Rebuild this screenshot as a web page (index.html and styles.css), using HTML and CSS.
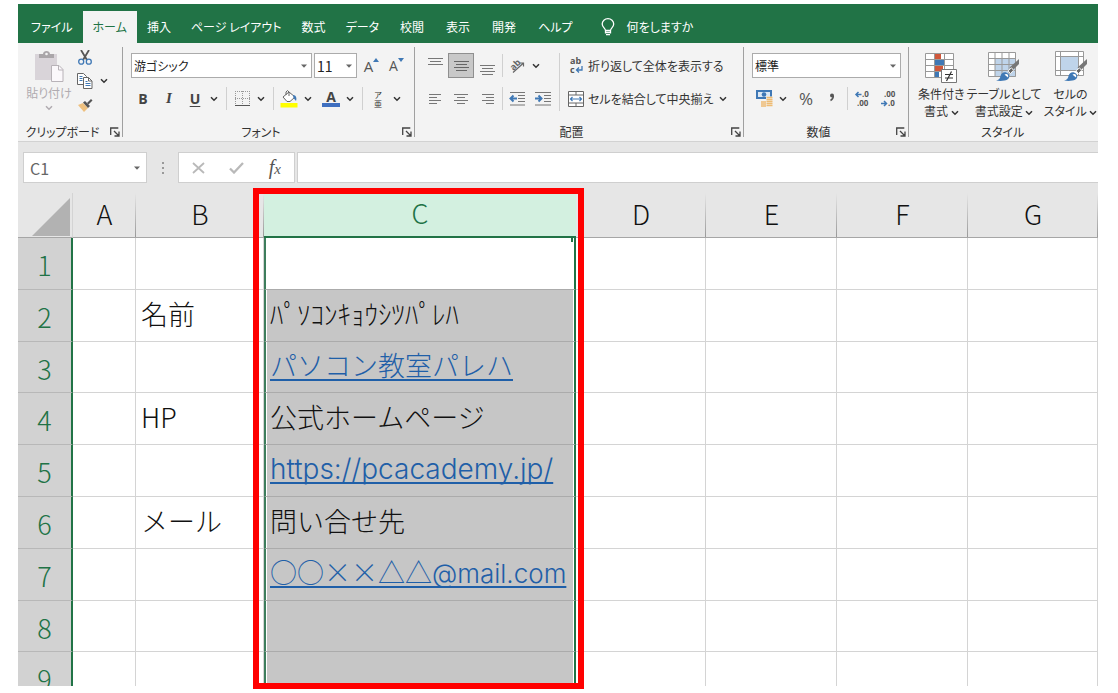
FILE: index.html
```html
<!DOCTYPE html>
<html lang="ja">
<head>
<meta charset="utf-8">
<title>Excel</title>
<link rel="stylesheet" href="styles.css">
</head>
<body>
<svg class="defs" aria-hidden="true">
  <symbol id="chev" viewBox="0 0 8 6"><path d="M1 1.200l3 3 3-3" fill="none" stroke="currentColor" stroke-width="1.500"/></symbol>
  <symbol id="tri" viewBox="0 0 6 4"><path d="M0 .5h6L3 3.800z" fill="#666"/></symbol>
  <symbol id="launch" viewBox="0 0 10 10"><path d="M.7 8V1h7.600M4 4l4.500 4.500M9 4.500V9H4.500" fill="none" stroke="#444" stroke-width="1.300"/></symbol>
  <symbol id="brush" viewBox="0 0 24 24"><path d="M23 0v5l-6.500 6.500-3-3z" fill="#777"/><path d="M15.500 8.800l-3.500 3 2.500 2.800 3-3.300z" fill="#666" stroke="#f3f3f3"/><path d="M0 21.500c3-.5 4-2 4.500-4.500 1-4 5-5 8-2 2 3 0 6-4 6.500-3 .6-6 .4-8.500 0z" fill="#3f78b5"/><path d="M8.500 15.500c2.500-1.500 4.500.5 3.500 3-1-1-2-1.500-3.500-3z" fill="#fff"/></symbol>
</svg>
<div class="app">
  <nav class="tabs">
    <a href="#">ファイル</a>
    <a href="#" class="active">ホーム</a>
    <a href="#">挿入</a>
    <a href="#">ページ レイアウト</a>
    <a href="#">数式</a>
    <a href="#">データ</a>
    <a href="#">校閲</a>
    <a href="#">表示</a>
    <a href="#">開発</a>
    <a href="#">ヘルプ</a>
    <a href="#" class="tell"><svg width="14" height="18" viewBox="0 0 14 18" fill="none" stroke="#fff" stroke-width="1.300"><path d="M4.500 12.500C4.500 10 1.200 9.500 1.200 6a5.700 5.300 0 0 1 11.500 0c0 3.500-3.200 4-3.200 6.500zM4.500 14.500h5M5 16.700h4M4.500 12v3.500M9.500 12v3.500"/></svg><span>何をしますか</span></a>
  </nav>

  <div class="ribbon">
    <section class="group clipboard">
      <div class="body">
        <button class="paste" disabled>
          <svg width="30" height="32" viewBox="0 0 30 32"><path d="M1 3h22v26H1z" fill="#d9d4d9"/><path d="M5 7V3h4c0-4 7-4 7 0h4v4z" fill="#aaa6a9"/><circle cx="12.500" cy="3" r="1.300" fill="#f3f3f3"/><path d="M17.500 14.500h7.500l4 4v12H17.500z" fill="#fbf8fb" stroke="#b8b3b8"/><path d="M24.500 14.500V19H29" fill="none" stroke="#b8b3b8"/></svg>
          <span>貼り付け</span>
          <svg class="chev"><use href="#chev"/></svg>
        </button>
        <div class="clips">
          <button aria-label="切り取り"><svg width="14" height="15" viewBox="0 0 14 15" fill="none"><path d="M3 0l6 10M11 0L5 10" stroke="#555" stroke-width="1.800"/><circle cx="3.200" cy="11.700" r="2.500" stroke="#3f78b5" stroke-width="1.300"/><circle cx="10.800" cy="11.700" r="2.500" stroke="#3f78b5" stroke-width="1.300"/></svg></button>
          <div class="row-s"><button aria-label="コピー"><svg width="16" height="16" viewBox="0 0 16 16" fill="#fff" stroke="#666"><path d="M.5.5h6l3 3v8h-9z"/><path d="M2.500 3.500h3M2.500 5.500h3M2.500 7.500h3" stroke="#3f78b5"/><path d="M6.500 4.500h5l3.500 3.500v7.500H6.500z"/><path d="M11.500 4.500V8H15" fill="none"/><path d="M8.500 8.500h2M8.500 10.500h5M8.500 12.500h5" stroke="#3f78b5"/></svg></button><button class="dd" aria-label="コピーのオプション"><svg class="chev"><use href="#chev"/></svg></button></div>
          <button aria-label="書式のコピー"><svg width="15" height="13" viewBox="0 0 15 13"><path d="M0 6l5-2 5 5-4 4z" fill="#eec07e"/><path d="M5 3.500l2-1.500 5 5-2 2z" fill="#555"/><path d="M9 4l4-4 1.500 1.500-4 4z" fill="#555"/></svg></button>
        </div>
      </div>
      <footer><span>クリップボード</span><button aria-label="クリップボードの設定"><svg class="launch"><use href="#launch"/></svg></button></footer>
    </section>

    <section class="group font">
      <div class="body stack">
        <div class="row">
          <label class="combo name"><select aria-label="フォント名"><option>游ゴシック</option></select><svg class="tri"><use href="#tri"/></svg></label>
          <label class="combo size"><select aria-label="フォント サイズ"><option>11</option></select><svg class="tri"><use href="#tri"/></svg></label>
          <button class="grow big" aria-label="フォント サイズの拡大">A<svg width="6" height="4" viewBox="0 0 6 4"><path d="M0 4l3-4 3 4z" fill="#3f78b5"/></svg></button>
          <button class="grow" aria-label="フォント サイズの縮小">A<svg width="6" height="4" viewBox="0 0 6 4"><path d="M0 0h6L3 4z" fill="#3f78b5"/></svg></button>
        </div>
        <div class="row">
          <button class="b">B</button><button class="i">I</button><button class="u">U</button><button class="dd" aria-label="下線の種類"><svg class="chev"><use href="#chev"/></svg></button>
          <span class="sep"></span>
          <button aria-label="罫線"><svg width="15" height="16" viewBox="0 0 15 16" fill="none" stroke="#999"><path d="M.5 0v14M7.500 0v14M14.500 0v14M0 .5h15M0 7.500h15" stroke-dasharray="1 1"/><path d="M0 14.500h15" stroke="#555"/></svg></button><button class="dd" aria-label="罫線の種類"><svg class="chev"><use href="#chev"/></svg></button>
          <span class="sep"></span>
          <button aria-label="塗りつぶしの色"><svg width="18" height="18" viewBox="0 0 18 18"><path d="M.5 13h17v4.500H.5z" fill="#ff0"/><path d="M3 7l6-5 6 5-5 4.500H7z" fill="#fff" stroke="#666"/><path d="M6 5V2q1.500-3 3 0v4" fill="none" stroke="#666"/><path d="M13 5c3 0 4 3 3 6-1-1-1.500-2-2.500-3z" fill="#3f78b5"/></svg></button><button class="dd" aria-label="塗りつぶしの色を選択"><svg class="chev"><use href="#chev"/></svg></button>
          <button class="color">A</button><button class="dd" aria-label="フォントの色を選択"><svg class="chev"><use href="#chev"/></svg></button>
          <span class="sep"></span>
          <button class="ruby" aria-label="ふりがなの表示"><span>ア</span><span>亜</span></button><button class="dd" aria-label="ふりがなの設定"><svg class="chev"><use href="#chev"/></svg></button>
        </div>
      </div>
      <footer><span>フォント</span><button aria-label="フォントの設定"><svg class="launch"><use href="#launch"/></svg></button></footer>
    </section>

    <section class="group align">
      <div class="body">
        <div class="stack">
          <div class="row">
            <button aria-label="上揃え"><svg width="15" height="18" viewBox="0 0 15 18" stroke="#777"><path d="M0 1.500h15M2 4.500h11M0 7.500h15"/></svg></button><button class="on" aria-label="上下中央揃え"><svg width="15" height="18" viewBox="0 0 15 18" stroke="#666"><path d="M0 4.500h15M2 7.500h11M0 10.500h15M2 13.500h11"/></svg></button><button aria-label="下揃え"><svg width="15" height="18" viewBox="0 0 15 18" stroke="#777"><path d="M0 8.500h15M2 11.500h11M0 14.500h15M2 17.500h11"/></svg></button>
            <span class="sep tight"></span>
            <button aria-label="方向"><svg width="18" height="20" viewBox="0 0 18 20"><g transform="rotate(-45 9 10)"><text x="3" y="11" class="ab">ab</text></g><path d="M5 16.500L15.500 7M15.500 10.500V7H12" fill="none" stroke="#666" stroke-width="1.200"/></svg></button><button class="dd" aria-label="方向の種類"><svg class="chev"><use href="#chev"/></svg></button>
          </div>
          <div class="row">
            <button aria-label="左揃え"><svg width="13" height="12" viewBox="0 0 13 12" stroke="#777"><path d="M0 1.500h12M0 4.500h8M0 7.500h12M0 10.500h8"/></svg></button><button aria-label="中央揃え"><svg width="14" height="12" viewBox="0 0 14 12" stroke="#777"><path d="M0 1.500h14M3 4.500h8M0 7.500h14M3 10.500h8"/></svg></button><button aria-label="右揃え"><svg width="13" height="12" viewBox="0 0 13 12" stroke="#777"><path d="M1 1.500h12M5 4.500h8M1 7.500h12M5 10.500h8"/></svg></button>
            <span class="sep tight"></span>
            <button aria-label="インデントを減らす"><svg width="16" height="14" viewBox="0 0 16 14" fill="none" stroke="#777"><path d="M1 .5h15M9 3.500h7M9 6.500h7M9 9.500h7M1 13h15"/><path d="M8 6.500H2M4.500 3.500l-3 3 3 3" stroke="#3f78b5" stroke-width="2"/></svg></button><button aria-label="インデントを増やす"><svg width="16" height="14" viewBox="0 0 16 14" fill="none" stroke="#777"><path d="M0 .5h16M9 3.500h7M9 6.500h7M9 9.500h7M0 13h16"/><path d="M0 6.500h6M3.500 3.500l3 3-3 3" stroke="#3f78b5" stroke-width="2"/></svg></button>
          </div>
        </div>
        <span class="vsep"></span>
        <div class="stack">
          <div class="row"><button class="text"><svg width="16" height="22" viewBox="0 0 16 22"><text x="2" y="9" class="abc">ab</text><text x="2" y="18" class="abc">c</text><path d="M14 11v4H8.500M11 12.500L8.500 15l2.500 2.500" fill="none" stroke="#3f78b5" stroke-width="1.300"/></svg><span>折り返して全体を表示する</span></button></div>
          <div class="row"><button class="text"><svg width="16" height="16" viewBox="0 0 16 16" fill="#fff" stroke="#666"><path d="M.5.5h15v15H.5zM.5 4h15M.5 12h15M8 .5V4M8 12v3.500"/><path d="M2.500 8h11M4.500 6l-2 2 2 2M11.500 6l2 2-2 2" fill="none" stroke="#3f78b5" stroke-width="1.200"/></svg><span>セルを結合して中央揃え</span></button><button class="dd gap" aria-label="結合の種類"><svg class="chev"><use href="#chev"/></svg></button></div>
        </div>
      </div>
      <footer><span>配置</span><button aria-label="配置の設定"><svg class="launch"><use href="#launch"/></svg></button></footer>
    </section>

    <section class="group number">
      <div class="body stack">
        <div class="row"><label class="combo format"><select aria-label="数値の書式"><option>標準</option></select><svg class="tri"><use href="#tri"/></svg></label></div>
        <div class="row">
          <button aria-label="通貨表示形式"><svg width="17" height="17" viewBox="0 0 17 17"><path d="M0 0h16v9H0z" fill="#3f78b5"/><path d="M2 2h12v5H2z" fill="#dce8f4"/><circle cx="8" cy="4.500" r="2.300" fill="#3f78b5"/><path d="M5 11h6v5H5zM10 6.500h6.500V16H10z" fill="#f3f3f3"/><path d="M5 12h5M5 14h5M5 16h5M10.500 7.500h6M10.500 9.500h6M10.500 11.500h6M10.500 13.500h6M10.500 15.500h6" stroke="#eebb73" stroke-width="1.400"/></svg></button><button class="dd" aria-label="通貨の種類"><svg class="chev"><use href="#chev"/></svg></button>
          <button class="pct gap">%</button><button aria-label="桁区切り"><svg width="6" height="12" viewBox="0 0 6 12"><path d="M4.300 3c0 2.500-.8 3.500-2.800 4.500" fill="none" stroke="#555" stroke-width="1.500"/><circle cx="3" cy="2.500" r="2" fill="#555"/></svg></button>
          <span class="sep tight"></span>
          <button aria-label="小数点以下の表示桁数を増やす"><svg width="16" height="20" viewBox="0 0 16 20"><path d="M7.500 5.500h-5M4.500 3l-2.500 2.500L4.500 8" fill="none" stroke="#3f78b5" stroke-width="1.500"/><text x="8" y="8" class="dec">.0</text><text x="3" y="17" class="dec">.00</text></svg></button><button aria-label="小数点以下の表示桁数を減らす"><svg width="16" height="20" viewBox="0 0 16 20"><path d="M1 14.500h5M4 12l2.500 2.500L4 17" fill="none" stroke="#3f78b5" stroke-width="1.500"/><text x="4" y="8" class="dec">.00</text><text x="8" y="17" class="dec">.0</text></svg></button>
        </div>
      </div>
      <footer><span>数値</span><button aria-label="数値の設定"><svg class="launch"><use href="#launch"/></svg></button></footer>
    </section>

    <section class="group styles">
      <div class="body">
        <button class="tile">
          <svg width="34" height="32" viewBox="0 0 34 32"><path d="M1.500 2.500h28v24h-28z" fill="#fff"/><path d="M11 2h6v6h-6zM11 14h8v6h-8z" fill="#d0573a"/><path d="M11 8h10v6H11zM11 20h4v7h-4z" fill="#3f78b5"/><path d="M1.500 2.500h28v24h-28zM1.500 8.500h28M1.500 14.500h28M1.500 20.500h28M10.500 2v25M20.500 2v25" fill="none" stroke="#999"/><path d="M17.500 18.500h15v13h-15z" fill="#fff" stroke="#777"/><path d="M21 23.500h8M21 27h8M27.500 20.500l-5 9.500" fill="none" stroke="#333" stroke-width="1.200"/></svg>
          <span>条件付き<br>書式 <svg class="chev"><use href="#chev"/></svg></span>
        </button>
        <button class="tile">
          <svg width="34" height="32" viewBox="0 0 34 32"><path d="M1.500 1.500h27v24h-27z" fill="#fff"/><path d="M8 8h21v18H8z" fill="#bfd4ea"/><path d="M1.500 1.500h27v24h-27zM1.500 7.500h27M1.500 13.500h27M1.500 19.500h27M8 1v25M15 1v25M22 1v25" fill="none" stroke="#999"/><use href="#brush" x="9" y="8" width="24" height="24"/></svg>
          <span>テーブルとして<br>書式設定 <svg class="chev"><use href="#chev"/></svg></span>
        </button>
        <button class="tile">
          <svg width="34" height="32" viewBox="0 0 34 32"><path d="M1.500.5h28v24h-28z" fill="#fff"/><path d="M7 6h17v13H7z" fill="#bfd4ea"/><path d="M1.500.5h28v24h-28zM1.500 5.500h28M1.500 19.500h28M6.500.5v24M24.500.5v24" fill="none" stroke="#999"/><use href="#brush" x="10" y="8" width="24" height="24"/></svg>
          <span>セルの<br>スタイル <svg class="chev"><use href="#chev"/></svg></span>
        </button>
      </div>
      <footer><span>スタイル</span></footer>
    </section>
  </div>

  <div class="formula">
    <div class="namebox"><input aria-label="名前ボックス" value="C1"><button aria-label="名前の一覧"><svg class="tri"><use href="#tri"/></svg></button></div>
    <svg class="dots" width="4" height="14" viewBox="0 0 4 14"><path d="M1 1h2v2H1zM1 6h2v2H1zM1 11h2v2H1z" fill="#999"/></svg>
    <div class="fx">
      <button aria-label="キャンセル"><svg width="13" height="12" viewBox="0 0 13 12"><path d="M1 1l11 10M12 1L1 11" stroke="#b9b9b9" stroke-width="1.800"/></svg></button>
      <button aria-label="入力"><svg width="15" height="12" viewBox="0 0 15 12"><path d="M1 6.500L5 10.500 14 1" fill="none" stroke="#b9b9b9" stroke-width="2.300"/></svg></button>
      <button class="fn" aria-label="関数の挿入"><i>f</i><i class="x">x</i></button>
    </div>
    <input class="entry" aria-label="数式バー">
  </div>

  <div class="area">
    <div class="sheet">
      <table>
        <colgroup><col class="w-head"><col class="w-a"><col class="w-b"><col class="w-c"><col class="w-d"><col class="w-e"><col class="w-e"><col></colgroup>
        <thead><tr><th class="corner"><svg width="38" height="38" viewBox="0 0 38 38"><path d="M38 0v38H0z" fill="#b2b2b2"/></svg></th><th>A</th><th>B</th><th class="sel">C</th><th>D</th><th>E</th><th>F</th><th>G</th></tr></thead>
        <tbody>
          <tr><th>1</th><td></td><td></td><td class="sel first"></td><td></td><td></td><td></td><td></td></tr>
          <tr><th>2</th><td></td><td>名前</td><td class="sel">ﾊﾟｿｺﾝｷｮｳｼﾂﾊﾟﾚﾊ</td><td></td><td></td><td></td><td></td></tr>
          <tr><th>3</th><td></td><td></td><td class="sel"><a href="#">パソコン教室パレハ</a></td><td></td><td></td><td></td><td></td></tr>
          <tr><th>4</th><td></td><td>HP</td><td class="sel">公式ホームページ</td><td></td><td></td><td></td><td></td></tr>
          <tr><th>5</th><td></td><td></td><td class="sel"><a href="#" class="latin url">https://pcacademy.jp/</a></td><td></td><td></td><td></td><td></td></tr>
          <tr><th>6</th><td></td><td>メール</td><td class="sel">問い合せ先</td><td></td><td></td><td></td><td></td></tr>
          <tr><th>7</th><td></td><td></td><td class="sel"><a href="#">○○××△△<span class="latin">@mail.com</span></a></td><td></td><td></td><td></td><td></td></tr>
          <tr><th>8</th><td></td><td></td><td class="sel"></td><td></td><td></td><td></td><td></td></tr>
          <tr><th>9</th><td></td><td></td><td class="sel"></td><td></td><td></td><td></td><td></td></tr>
        </tbody>
      </table>
    </div>
    <div class="marker"></div>
  </div>
</div>
</body>
</html>
```
FILE: styles.css
```css
* { box-sizing: border-box; }
body { margin: 0; background: #fff; font: 12px/16px "Noto Sans CJK JP", sans-serif; color: #333; }
.defs { position: absolute; width: 0; height: 0; }
button, select, input { font: inherit; color: inherit; border: 0; padding: 0; margin: 0; background: none; }
.app { display: flex; flex-direction: column; height: 100vh; padding: 4px 20px 7px 18px; }

.tabs { display: flex; height: 39px; padding-left: 3px; background: #217346; font-feature-settings: "palt"; }
.tabs a { display: flex; align-items: center; margin-top: 6px; padding: 0 10px; color: #fff; text-decoration: none; white-space: nowrap; }
.tabs a:nth-child(n+7) { padding: 0 11px; }
.tabs a.active { margin: 7px 0 0; background: #f3f3f3; color: #217346; }
.tabs a.tell { gap: 12px; padding-left: 17px; }

.ribbon { display: flex; height: 99px; background: #f3f3f3; border-bottom: 1px solid #d2d2d2; font-feature-settings: "palt"; }
.ribbon button { display: flex; align-items: center; justify-content: center; flex: none; white-space: nowrap; }
.group { display: flex; flex-direction: column; justify-content: space-between; flex: none; padding: 10px 3px 0 7px; background: linear-gradient(#a0a0a0, #a0a0a0) right center / 1px 90px no-repeat; }
.group .body { display: flex; }
.clipboard { width: 105px; }
.font { width: 292px; }
.align { width: 329px; }
.number { width: 165px; }
.styles { flex: 1; background: none; }
.group footer { display: flex; align-items: center; height: 18px; }
.group footer span { flex: 1; padding-right: 10px; text-align: center; white-space: nowrap; }
.body.stack, .stack { display: flex; flex-direction: column; gap: 8px; }
.row { display: flex; align-items: center; height: 25px; }
.row > button { width: 26px; height: 25px; }
.row > .dd, .row-s > .dd { width: 12px; }
.row > .gap { margin-left: 4px; }
.row > .on { background: #c8c8c8; border: 1px solid #8f8f8f; }
.chev { width: 8px; height: 6px; }
.tri { width: 6px; height: 4px; }
.launch { width: 10px; height: 10px; }
.sep { width: 1px; height: 23px; margin: 0 2px 0 6px; background: #d0d0d0; }
.sep.tight { margin: 0 1px 0 2px; }
.vsep { width: 1px; margin: 0 8px 0 3px; background: #d0d0d0; }

.clipboard { padding-top: 6px; }
.clipboard .body { gap: 4px; }
.ribbon .paste { flex-direction: column; width: 48px; color: #b0abb0; }
.paste span { margin: 2px 0 4px; }
.clips { display: flex; flex-direction: column; align-items: flex-start; gap: 8px; }
.clips button { width: 16px; height: 16px; }
.row-s { display: flex; gap: 5px; }

.combo { position: relative; display: flex; flex: none; height: 25px; background: #fff; border: 1px solid #ababab; }
.combo select { appearance: none; width: 100%; padding: 0 2px; color: #222; outline: 0; }
.combo .tri { position: absolute; right: 4px; top: 10px; pointer-events: none; }
.name { width: 181px; margin-left: 1px; }
.size { width: 43px; margin: 0 2px; }
.size select { font-size: 14px; }
.format { width: 149px; margin-left: 1px; }
.row > .grow { width: 25px; font: 14px "Open Sans", sans-serif; color: #555; }
.row > .big { font-size: 15px; }
.grow svg { align-self: flex-start; margin-top: 5px; }
.ribbon .b, .ribbon .i, .ribbon .u, .ribbon .color { font: bold 14px "Open Sans", sans-serif; color: #444; }
.ribbon .i { font: italic bold 15px "Liberation Serif", serif; }
.ribbon .u { text-decoration: underline; text-underline-offset: 2px; }
.ribbon .row > .color { width: 18px; height: 17px; margin: 0 4px 0 8px; border-bottom: 4px solid #3f6fbf; line-height: 13px; }
.ribbon .ruby { flex-direction: column; font-size: 8px; line-height: 9px; }
.ab { font: bold 9px "Open Sans", sans-serif; fill: #666; }
.abc { font: bold 9px "Open Sans", sans-serif; fill: #555; }
.dec { font: bold 8px "Open Sans", sans-serif; fill: #555; }
.ribbon .row > .text { width: auto; gap: 4px; }
.ribbon .pct { font: 17px "Open Sans", sans-serif; color: #555; }
.styles { padding: 6px 4px 0 9px; }
.styles .body { gap: 2px; }
.ribbon .tile { flex-direction: column; gap: 2px; line-height: 17px; padding-top: 2px; }

.formula { display: flex; align-items: center; padding: 10px 0 10px 5px; background: #e6e6e6; }
.namebox, .fx, .entry { display: flex; height: 31px; background: #fff; border: 1px solid #cfcfcf; }
.namebox { width: 124px; align-items: center; padding: 0 6px; }
.namebox input { flex: 1; min-width: 0; font: 16px "Noto Sans CJK JP", sans-serif; color: #666; }
.namebox button { display: flex; }
.dots { margin: 0 13px 0 14px; }
.fx { width: 117px; margin-right: 2px; }
.fx button { flex: 1; display: flex; align-items: center; justify-content: center; }
.fn i { font: italic 20px "Liberation Serif", serif; color: #555; }
.fn .x { font-size: 15px; padding-top: 4px; }
.formula .entry { flex: 1; min-width: 0; border-right: 0; padding: 0 6px; }

.area { position: relative; flex: 1; min-height: 0; }
.sheet { height: 100%; overflow: hidden; }
table { width: 100%; table-layout: fixed; border-collapse: separate; border-spacing: 0; font-size: 27px; line-height: 36px; font-weight: 300; color: #111; }
.w-head { width: 55px; }
.w-a { width: 63px; }
.w-b { width: 128px; }
.w-c { width: 312px; }
.w-d { width: 130px; }
.w-e { width: 131px; }
th { padding: 0; font-weight: 300; text-align: center; }
thead th { height: 45px; padding-bottom: 3px; background: linear-gradient(#e6e6e6, #999) right / 1px 100% no-repeat #e6e6e6; border-bottom: 1px solid #a6a6a6; }
thead .corner { padding: 3px 2px 0 0; text-align: right; background: #e6e6e6; line-height: 0; border-right: 1px solid #d4d4d4; }
thead .sel { background: #d3f0e0; color: #217346; border-bottom: 2px solid #217346; }
tbody tr { height: 52px; }
tbody tr:nth-child(5n+3) { height: 51px; }
tbody th { padding-top: 3px; background: #d2d2d2; color: #217346; border-right: 2px solid #217346; border-bottom: 1px solid #b8b8b8; }
td { padding: 0 5px 4px; border-right: 1px solid #d4d4d4; border-bottom: 1px solid #d4d4d4; white-space: nowrap; }
td.sel { padding: 0 4px 4px; background: #c6c6c6; border-left: 2px solid #3d7d5c; border-right: 2px solid #217346; border-bottom-color: #ababab; box-shadow: inset 1px 0 #fff, inset -1px 0 #fff; }
td.first { background: linear-gradient(#217346, #217346) right top / 3px 4px no-repeat #fff; }
td a { color: #1f5fa8; text-decoration: underline; text-decoration-thickness: 2px; text-underline-offset: 3px; text-decoration-skip-ink: none; }
.latin { font-family: Inter, sans-serif; font-size: 26px; }
.url { font-size: 28px; }
.marker { position: absolute; left: 235px; top: -5px; bottom: -3px; width: 331px; border: 6px solid #f00; pointer-events: none; }
```
